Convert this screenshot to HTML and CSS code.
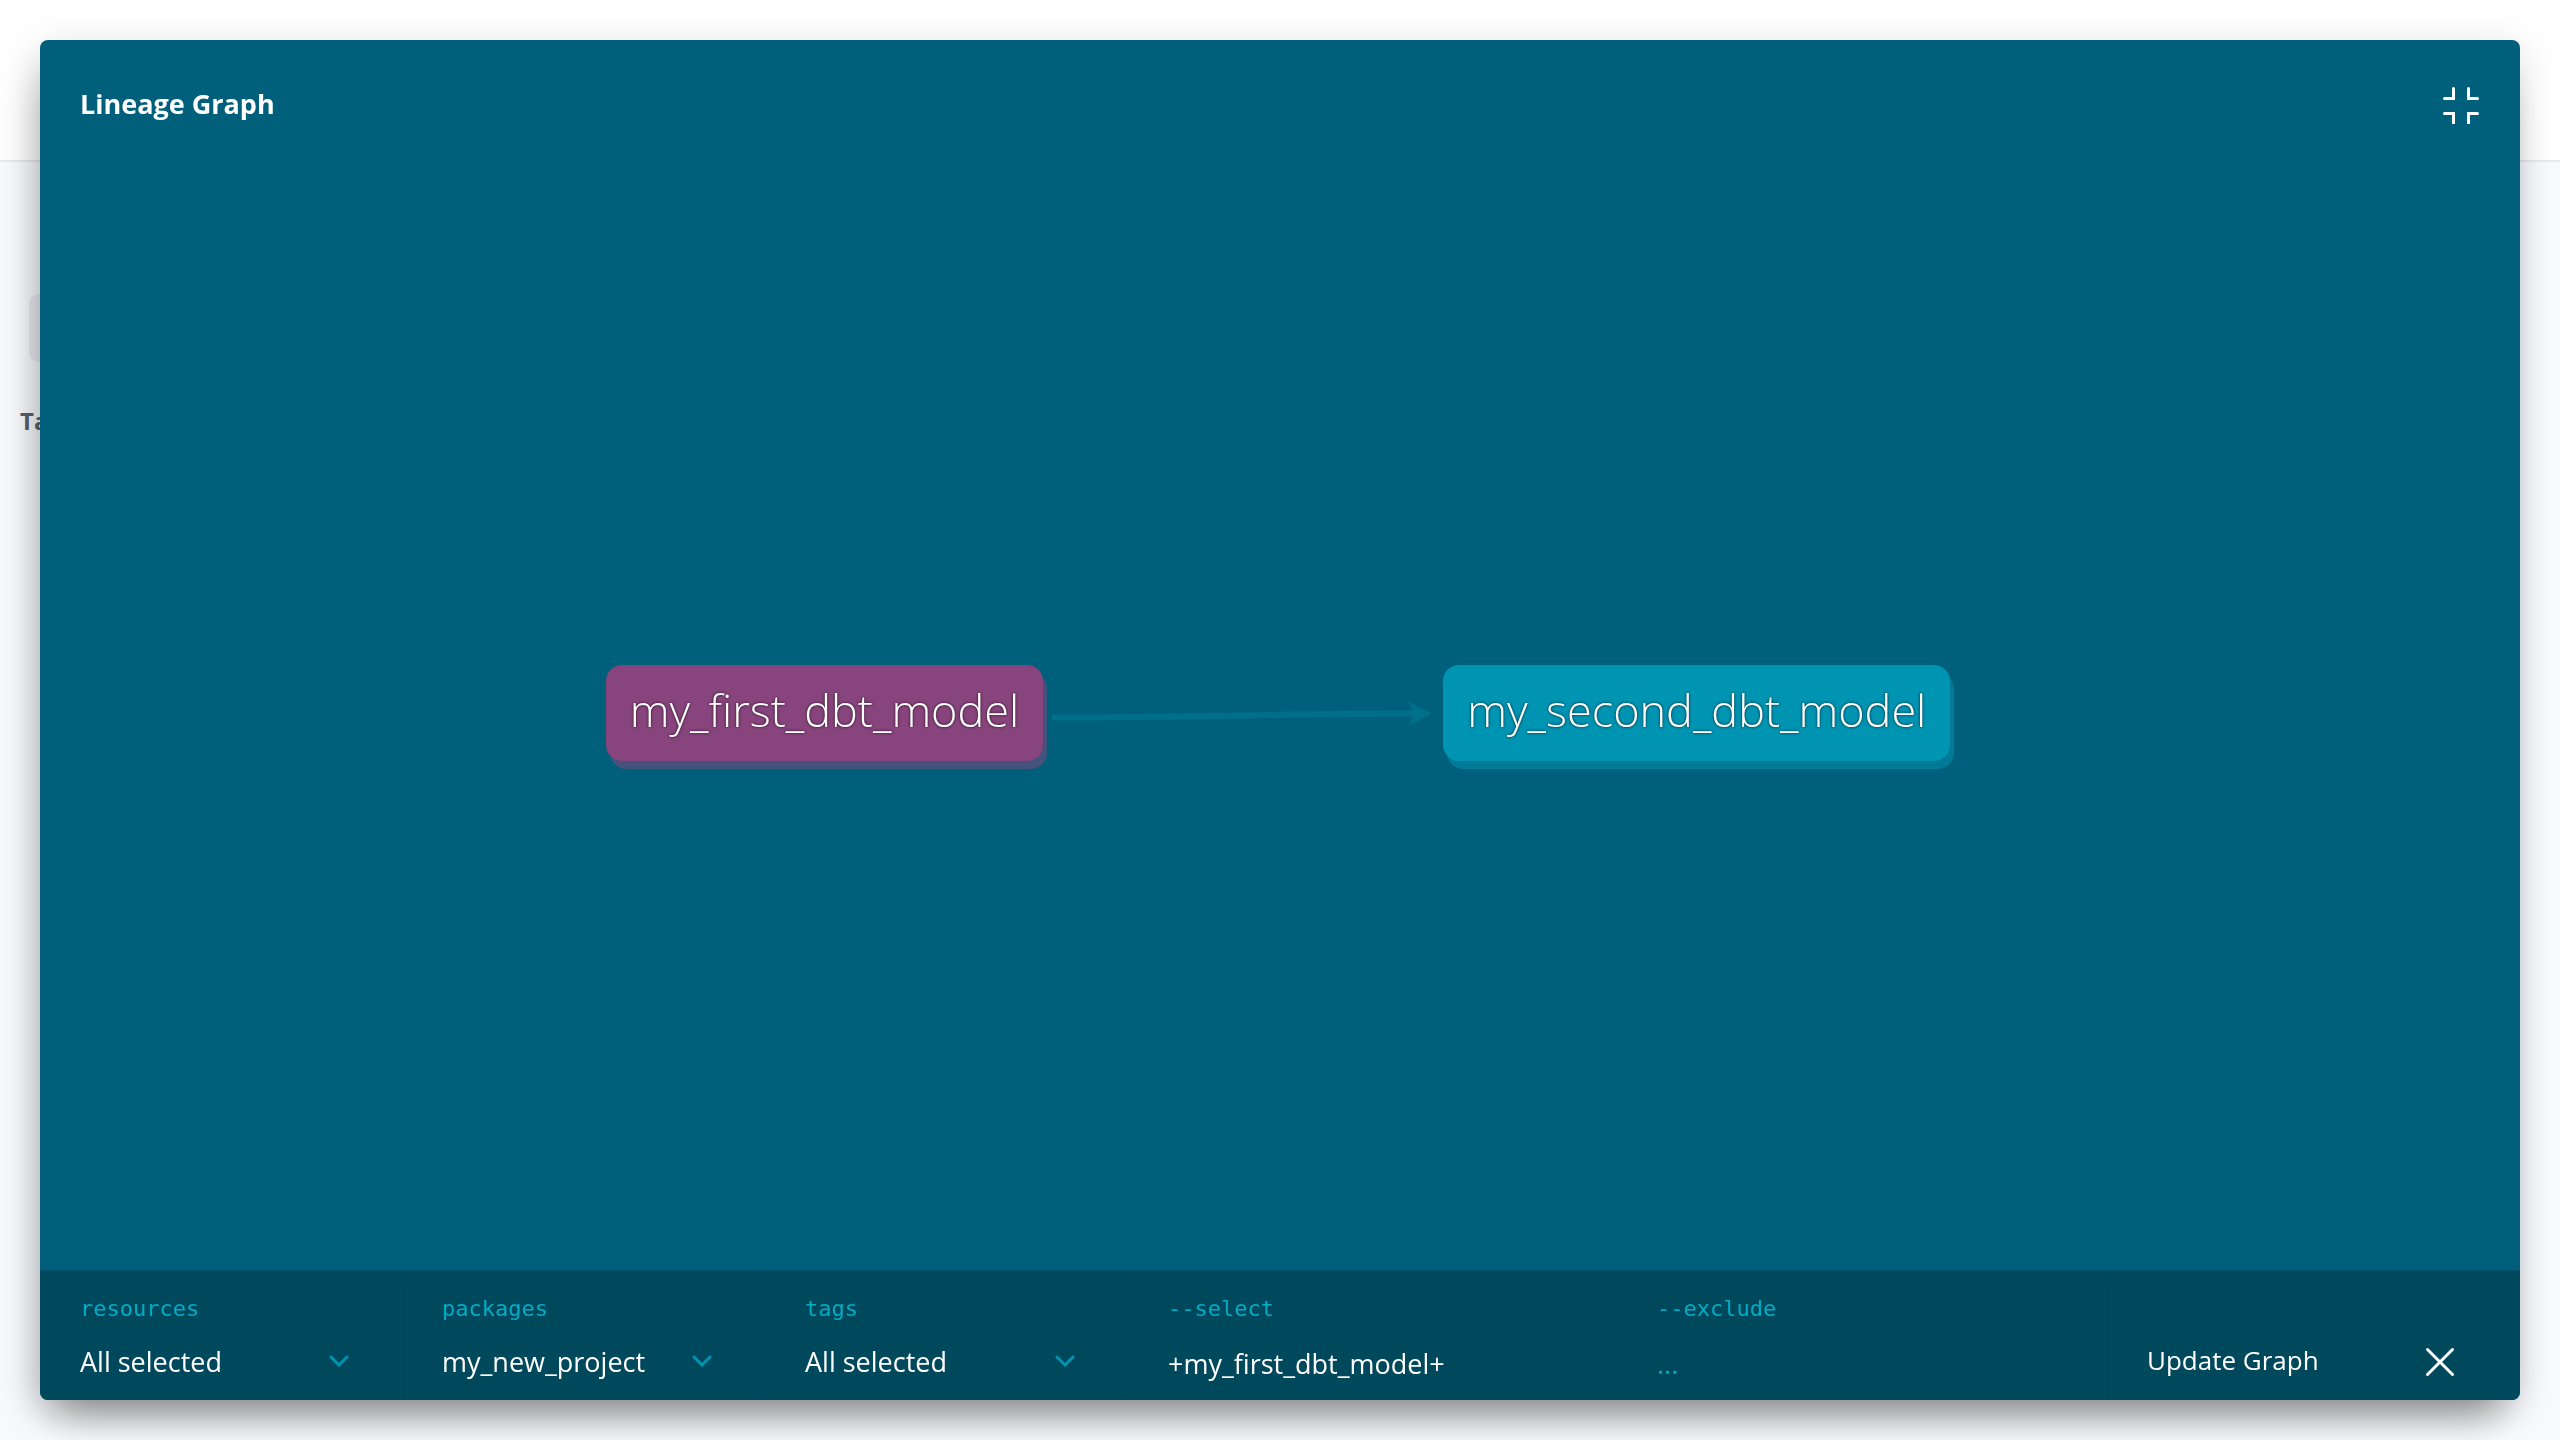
FILE: index.html
```html
<!DOCTYPE html>
<html lang="en">
<head>
<meta charset="utf-8">
<title>Lineage Graph</title>
<link rel="stylesheet" href="styles.css">
</head>
<body>
<div class="page">
  <div class="page-header"></div>
  <div class="page-body">
    <div class="page-tab"></div>
    <h2 class="page-heading">Ta</h2>
  </div>
</div>

<section class="modal" role="dialog" aria-labelledby="graph-title">
  <header class="modal-header">
    <h1 class="modal-title" id="graph-title">Lineage Graph</h1>
    <button class="icon-button" type="button" aria-label="Exit full screen">
      <svg width="38" height="38" viewBox="0 0 38 38" fill="none" stroke="currentColor" stroke-width="3" stroke-linecap="round">
        <path d="M2.5 12.5H11.5V2.5M26.500 2.500V12.500H35.500M2.500 27.500H11.500V37M35.500 27.500H26.500V37"/>
      </svg>
    </button>
  </header>

  <main class="graph">
    <div class="node node-current">my_first_dbt_model</div>
    <svg class="edge" width="400" height="40" viewBox="0 0 400 40">
      <path d="M9 24.500C150 24.500 250 20.500 375 20.500" fill="none" stroke="currentColor" stroke-width="6"/>
      <path d="M364 8L389 20.500L364 34C369 27 370 23 369 20.500C370 18 369 14 364 8Z" fill="currentColor"/>
    </svg>
    <div class="node node-model">my_second_dbt_model</div>
  </main>

  <form class="toolbar">
    <div class="field">
      <label class="field-label" for="resources">resources</label>
      <div class="picker">
        <select class="field-value" id="resources"><option>All selected</option></select>
        <svg class="chevron" width="20" height="12" viewBox="0 0 20 12"><path d="M2 2L10 10L18 2"/></svg>
      </div>
    </div>
    <div class="field">
      <label class="field-label" for="packages">packages</label>
      <div class="picker">
        <select class="field-value" id="packages"><option>my_new_project</option></select>
        <svg class="chevron" width="20" height="12" viewBox="0 0 20 12"><path d="M2 2L10 10L18 2"/></svg>
      </div>
    </div>
    <div class="field">
      <label class="field-label" for="tags">tags</label>
      <div class="picker">
        <select class="field-value" id="tags"><option>All selected</option></select>
        <svg class="chevron" width="20" height="12" viewBox="0 0 20 12"><path d="M2 2L10 10L18 2"/></svg>
      </div>
    </div>
    <div class="field field-open">
      <label class="field-label" for="select">--select</label>
      <input class="field-value field-input" id="select" type="text" value="+my_first_dbt_model+">
    </div>
    <div class="field">
      <label class="field-label" for="exclude">--exclude</label>
      <input class="field-value field-input" id="exclude" type="text" placeholder="...">
    </div>
    <div class="actions">
      <button class="update" type="submit">Update Graph</button>
      <button class="icon-button" type="button" aria-label="Close">
        <svg width="30" height="30" viewBox="0 0 30 30" fill="none" stroke="currentColor" stroke-width="3" stroke-linecap="round">
          <path d="M2.500 2.500L27.500 27.500M27.500 2.500L2.500 27.500"/>
        </svg>
      </button>
    </div>
  </form>
</section>
</body>
</html>
```
FILE: styles.css
```css
* {
  box-sizing: border-box;
}

body {
  margin: 0;
  font-family: "Open Sans", "Noto Sans", sans-serif;
  font-size: 26px;
  background: #f8fafd;
  overflow: hidden;
}

.page-header {
  height: 162px;
  background: #fff;
  border-bottom: 2px solid #e8eaec;
}

.page-body {
  padding: 132px 20px 0;
}

.page-tab {
  width: 160px;
  height: 68px;
  margin-left: 9px;
  border: 2px solid #e8e9ef;
  border-radius: 10px;
  background: #ebecf3;
}

.page-heading {
  margin: 42px 0 0;
  font-size: 24px;
  line-height: 34px;
  font-weight: 700;
  color: #5a6066;
}

.modal {
  position: fixed;
  inset: 40px;
  display: flex;
  flex-direction: column;
  overflow: hidden;
  border-radius: 8px;
  background: #005f7b;
  color: #fff;
  box-shadow:
    0 8px 40px rgba(0, 0, 0, 0.14),
    0 30px 40px -20px rgba(0, 0, 0, 0.34),
    -16px 24px 40px -10px rgba(0, 0, 0, 0.16);
}

.modal-header {
  display: flex;
  justify-content: space-between;
  align-items: flex-start;
  height: 116px;
  padding: 46px 40px 0;
}

.modal-title {
  margin: 0;
  font-size: 27px;
  line-height: 36px;
  font-weight: 700;
}

button {
  padding: 0;
  border: 0;
  background: none;
  color: inherit;
  font: inherit;
  cursor: pointer;
}

.icon-button svg {
  display: block;
}

.graph {
  flex: 1;
  display: flex;
  align-items: center;
  justify-content: center;
  padding-right: 4px;
}

.node {
  height: 96px;
  padding: 0 24px;
  border-radius: 16px;
  font-size: 45px;
  line-height: 90px;
  font-weight: 300;
  text-shadow: 0 0 3px rgba(0, 0, 0, 0.8);
}

.node-current {
  background: #88447d;
  box-shadow: 4px 8px 0 #44527c;
}

.node-model {
  background: #0094b3;
  box-shadow: 4px 8px 0 #007a97;
}

.edge {
  color: #007089;
}

.toolbar {
  display: grid;
  grid-template-columns: 362fr 363fr 363fr 489fr 489fr 414fr;
  height: 130px;
  border-top: 1px solid #005069;
  background: #00485c;
}

.field {
  padding: 24px 52px 0 40px;
  border-right: 1px solid #004d62;
}

.field-open {
  border-right: 0;
}

.field-label {
  display: block;
  margin-bottom: 16px;
  font-family: "DejaVu Sans Mono", monospace;
  font-size: 22px;
  line-height: 28px;
  color: #00adc5;
}

.picker {
  display: grid;
  align-items: center;
}

.picker > * {
  grid-area: 1 / 1;
}

.field-value {
  display: block;
  width: 100%;
  height: 44px;
  padding: 0;
  border: 0;
  background: none;
  color: inherit;
  font: inherit;
  font-size: 27px;
  appearance: none;
}

.field-input {
  padding-top: 4px;
}

.field-value::placeholder {
  color: #00adc5;
  opacity: 1;
}

.chevron {
  justify-self: end;
  fill: none;
  stroke: #0094b3;
  stroke-width: 3;
  stroke-linecap: round;
  pointer-events: none;
}

.actions {
  display: flex;
  justify-content: space-between;
  align-items: center;
  padding: 52px 65px 0 41px;
}

.update {
  padding-bottom: 4px;
}
```
